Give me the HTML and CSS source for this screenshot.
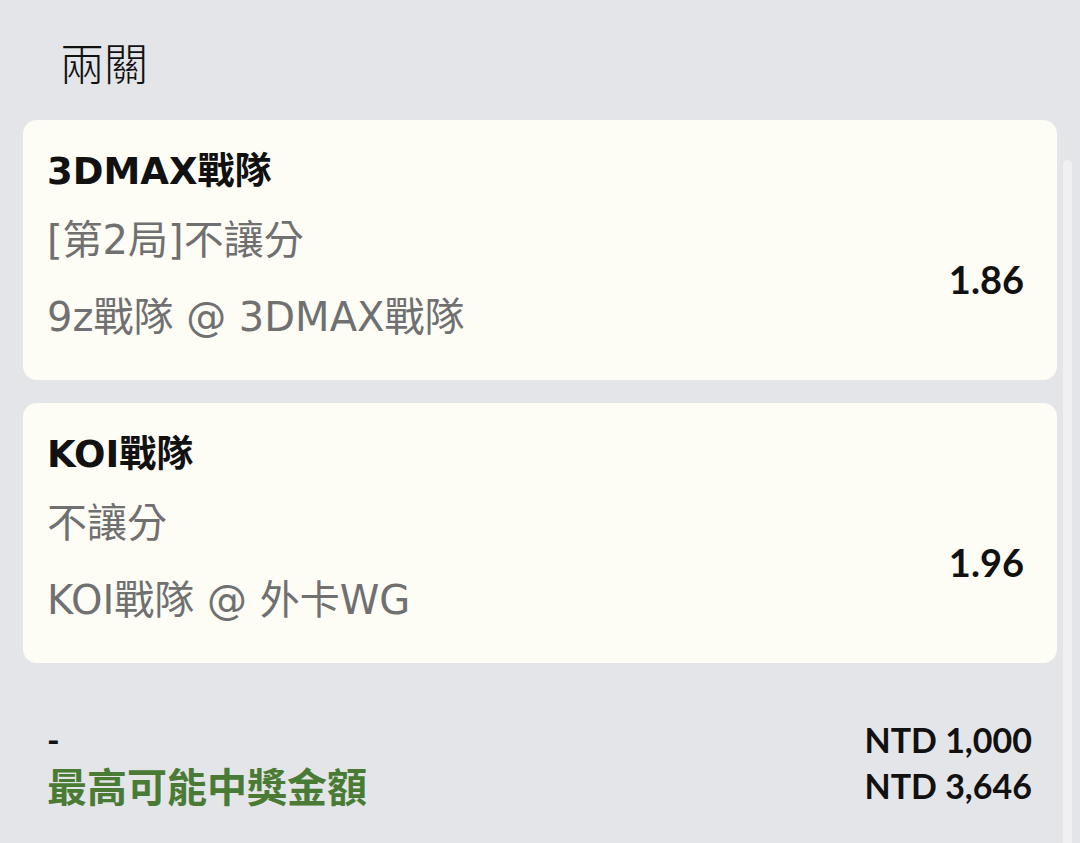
FILE: index.html
```html
<!DOCTYPE html>
<html lang="zh-Hant">
<head>
    <meta charset="UTF-8">
    <meta name="viewport" content="width=device-width, initial-scale=1.0">
    <title>兩關</title>
    <link rel="stylesheet" href="styles.css">
</head>
<body>
    <div class="page">
        <h1 class="section-title">兩關</h1>

        <div class="bet-card">
            <div class="bet-team">3DMAX戰隊</div>
            <div class="bet-body">
                <div class="bet-info">
                    <div class="bet-market">[第2局]不讓分</div>
                    <div class="bet-match">9z戰隊 @ 3DMAX戰隊</div>
                </div>
                <div class="bet-odds">1.86</div>
            </div>
        </div>

        <div class="bet-card">
            <div class="bet-team">KOI戰隊</div>
            <div class="bet-body">
                <div class="bet-info">
                    <div class="bet-market">不讓分</div>
                    <div class="bet-match">KOI戰隊 @ 外卡WG</div>
                </div>
                <div class="bet-odds">1.96</div>
            </div>
        </div>

        <div class="summary">
            <div class="summary-row">
                <span class="summary-label">-</span>
                <span class="summary-value">NTD 1,000</span>
            </div>
            <div class="summary-row">
                <span class="summary-label win">最高可能中獎金額</span>
                <span class="summary-value">NTD 3,646</span>
            </div>
        </div>
    </div>

    <div class="scrollbar"></div>
</body>
</html>
```

FILE: styles.css
```css
body {
    margin: 0;
    background-color: #e4e5e8;
    font-family: "DejaVu Sans", "Noto Sans CJK TC", sans-serif;
    color: #111;
    height: 843px;
    overflow: hidden;
}
.page {
    padding: 0 23px;
}
.section-title {
    margin: 0 0 30px;
    padding: 34px 0 0 37px;
    font-family: "Noto Sans CJK TC", sans-serif;
    font-size: 44px;
    font-weight: 300;
    line-height: 56px;
}
.bet-card {
    background: #fdfdf6;
    border-radius: 14px;
    height: 260px;
    box-sizing: border-box;
    padding: 24px 33px 0 24px;
    margin-bottom: 23px;
}
.bet-team {
    font-size: 37px;
    font-weight: 700;
    line-height: 56px;
}
.bet-body {
    display: flex;
    align-items: center;
    justify-content: space-between;
    margin-top: 12px;
}
.bet-market,
.bet-match {
    font-size: 40px;
    line-height: 56px;
    color: #707070;
}
.bet-match {
    margin-top: 21px;
}
.bet-odds {
    font-family: Lato, "Liberation Sans", sans-serif;
    font-size: 38px;
    font-weight: 700;
}
.summary {
    margin-top: 53px;
    padding: 0 25px 0 24px;
}
.summary-row {
    display: flex;
    justify-content: space-between;
    align-items: center;
    height: 46px;
}
.summary-label {
    font-family: Lato, "Noto Sans CJK TC", sans-serif;
    font-size: 34px;
    font-weight: 700;
}
.summary-label.win {
    font-family: "Noto Sans CJK TC", sans-serif;
    font-size: 40px;
    color: #4a7b35;
}
.summary-value {
    font-family: Lato, "Liberation Sans", sans-serif;
    font-size: 34px;
    font-weight: 700;
}
.scrollbar {
    position: absolute;
    top: 160px;
    left: 1063px;
    width: 9px;
    height: 700px;
    border-radius: 5px;
    background: #f0f0f2;
}
```
